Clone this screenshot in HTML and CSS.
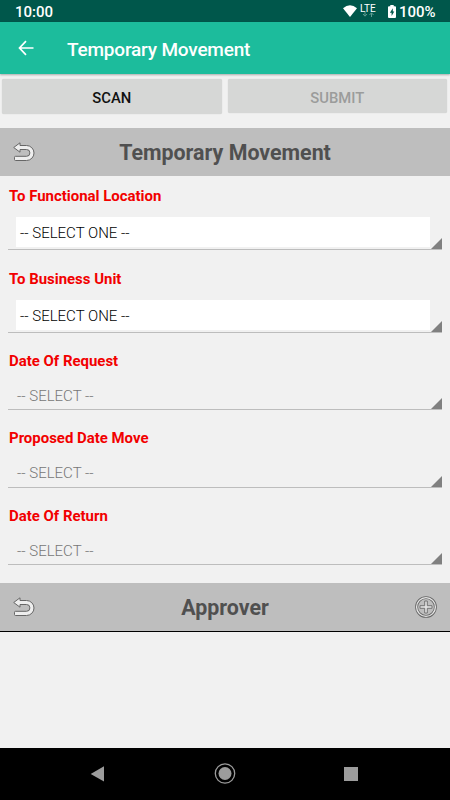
FILE: index.html
```html
<!DOCTYPE html>
<html lang="en">
<head>
<meta charset="utf-8">
<title>Temporary Movement</title>
<link rel="stylesheet" href="styles.css">
</head>
<body>
<div class="screen">
  <div class="status">
    <span class="clock">10:00</span>
    <svg class="wifi" width="14" height="12" viewBox="0 0 14 12"><path d="M0 3.2Q7-2.6 14 3.2L7 12Z" fill="#fff"/></svg>
    <span class="lte"><span>LTE</span><svg width="12" height="5" viewBox="0 0 12 5"><path d="M3 0v4M1 2l2 2.2L5 2M9.500 5V1M7.500 3l2-2.200 2 2.200" fill="none" stroke="#5f9c90"/></svg></span>
    <svg class="battery" width="8" height="13" viewBox="0 0 8 13"><path d="M2.300 0h3.400v1.300H7q1 0 1 1V12q0 1-1 1H1q-1 0-1-1V2.300q0-1 1-1h1.300z" fill="#fff"/><path d="M4.800 3.300 1.900 7.800h1.700v3.300l2.700-4.600H4.800z" fill="#00574b"/></svg>
    <span class="percent">100%</span>
  </div>
  <header class="appbar">
    <svg class="back" width="16" height="16" viewBox="0 0 16 16"><path d="M15.500 8H2M8 1.200 1.500 8 8 14.800" fill="none" stroke="#fff" stroke-width="1.700"/></svg>
    <h1>Temporary Movement</h1>
  </header>
  <div class="actions">
    <button class="scan">SCAN</button>
    <button class="submit" disabled>SUBMIT</button>
  </div>
  <div class="section">
    <svg class="undo" width="22" height="20" viewBox="0 0 22 20"><path d="M.7 5.500 7 .8V3.500h6.500a7.500 7.500 0 0 1 0 15H2.500q-1 0-1-1v-2.200q0-1 1-1h11a3.400 3.400 0 0 0 0-6.800H7v2.700Z" fill="#eee" stroke="#666" stroke-width="1" stroke-linejoin="round"/></svg>
    <h2>Temporary Movement</h2>
  </div>
  <main class="form">
    <div class="field tall"><label>To Functional Location</label><div class="spinner"><div class="box">-- SELECT ONE --</div></div></div>
    <div class="field tall"><label>To Business Unit</label><div class="spinner"><div class="box">-- SELECT ONE --</div></div></div>
    <div class="field"><label>Date Of Request</label><div class="spinner date">-- SELECT --</div></div>
    <div class="field"><label>Proposed Date Move</label><div class="spinner date">-- SELECT --</div></div>
    <div class="field"><label>Date Of Return</label><div class="spinner date">-- SELECT --</div></div>
  </main>
  <div class="section approver">
    <svg class="undo" width="22" height="20" viewBox="0 0 22 20"><path d="M.7 5.500 7 .8V3.500h6.500a7.500 7.500 0 0 1 0 15H2.500q-1 0-1-1v-2.200q0-1 1-1h11a3.400 3.400 0 0 0 0-6.800H7v2.700Z" fill="#eee" stroke="#666" stroke-width="1" stroke-linejoin="round"/></svg>
    <h2>Approver</h2>
    <svg class="add" width="22" height="22" viewBox="0 0 22 22"><circle cx="11" cy="11" r="9.400" fill="none" stroke="#666" stroke-width="2.900"/><circle cx="11" cy="11" r="9.400" fill="none" stroke="#e6e6e6" stroke-width="1.300"/><path d="M9.700 5h2.600v4.700H17v2.600h-4.700V17H9.700v-4.700H5V9.700h4.700z" fill="#e0e0e0" stroke="#6a6a6a" stroke-width=".9"/></svg>
  </div>
  <nav class="navbar">
    <svg width="310" height="52" viewBox="0 0 310 52"><path d="M20.700 26 34 18.200v15.200Z" fill="#9c9c9c"/><circle cx="155" cy="25.500" r="9.700" fill="none" stroke="#9c9c9c" stroke-width="1.300"/><circle cx="155" cy="25.500" r="6.500" fill="#9c9c9c"/><path d="M274 19h14v14h-14z" fill="#9c9c9c"/></svg>
  </nav>
</div>
</body>
</html>
```
FILE: styles.css
```css
* { box-sizing: border-box; }
body { margin: 0; font-family: Roboto, "Liberation Sans", sans-serif; }
h1, h2 { margin: 0; }
svg { display: block; flex: none; }

.screen {
  display: flex;
  flex-direction: column;
  width: 450px;
  height: 800px;
  overflow: hidden;
  background: #f1f1f1;
}

.status {
  display: flex;
  align-items: flex-start;
  height: 22px;
  padding: 0 15px;
  background: #00574b;
  color: #fff;
  font-size: 15px;
  font-weight: 500;
  line-height: 24px;
}
.clock { flex: 1; }
.wifi { margin: 5px 3px 0 0; }
.lte {
  width: 18px;
  margin-right: 10px;
  padding-top: 3px;
  font-size: 10px;
  font-weight: 400;
  line-height: 11px;
}
.lte span { display: block; }
.lte svg { margin: -2px 0 0 2px; }
.battery { margin: 5px 3px 0 0; }
.percent { width: 36px; white-space: nowrap; }

.appbar {
  display: flex;
  align-items: center;
  height: 52px;
  padding-left: 18px;
  background: #1cbc9c;
  box-shadow: 0 1px 2px rgba(0, 0, 0, .3);
  color: #fff;
}
.back { margin-right: 33px; }
.appbar h1 { padding-top: 2px; font-size: 19px; font-weight: 500; letter-spacing: -.2px; }

.actions {
  display: flex;
  gap: 6px;
  height: 54px;
  padding: 5px 3px 0 2px;
}
.actions button {
  flex: 1;
  height: 35px;
  padding: 2px 0 0;
  border: 0;
  border-radius: 2px;
  background: #d6d7d6;
  box-shadow: 0 0 1px rgba(0, 0, 0, .2);
  color: #111;
  font: 500 14.8px Roboto, "Liberation Sans", sans-serif;
}
.actions .submit { height: 34px; padding-top: 3px; color: #9b9c9b; }

.section {
  display: grid;
  grid-template-columns: 60px 1fr 60px;
  align-items: center;
  height: 48px;
  background: #bebebe;
  color: #505050;
}
.section h2 {
  padding-top: 1px;
  font-size: 21.4px;
  font-weight: 700;
  text-align: center;
}
.undo { margin-left: 13px; }
.add { margin-left: 25px; }

.form { height: 406.5px; padding: 0 8px; }
.field { height: 77.5px; padding-top: 18px; }
.field.tall { height: 82.5px; padding-top: 19px; }
.field.tall:first-child { height: 74px; padding-top: 10px; }
.field label {
  display: block;
  height: 20px;
  padding-left: 1px;
  color: #f20000;
  font-size: 14.95px;
  font-weight: 700;
  line-height: 20px;
}
.field.tall label { height: 21px; }
.spinner {
  height: 42.5px;
  padding: 9.5px 12px 0 8px;
  border-bottom: 1px solid #bdbdbd;
  background: linear-gradient(to bottom right, transparent 49%, #808080 51%) right bottom / 12px 12px no-repeat border-box;
  font-size: 15px;
}
.box {
  height: 30px;
  padding-left: 4px;
  background: #fff;
  color: #000;
  font-weight: 300;
  line-height: 32px;
}
.date {
  height: 39.5px;
  padding: 0 9px;
  color: #777;
  font-weight: 300;
  line-height: 50px;
}

.approver { height: 49.5px; border-bottom: 1.5px solid #000; }

.navbar {
  display: flex;
  justify-content: center;
  height: 52px;
  margin-top: auto;
  background: #000;
}
```
